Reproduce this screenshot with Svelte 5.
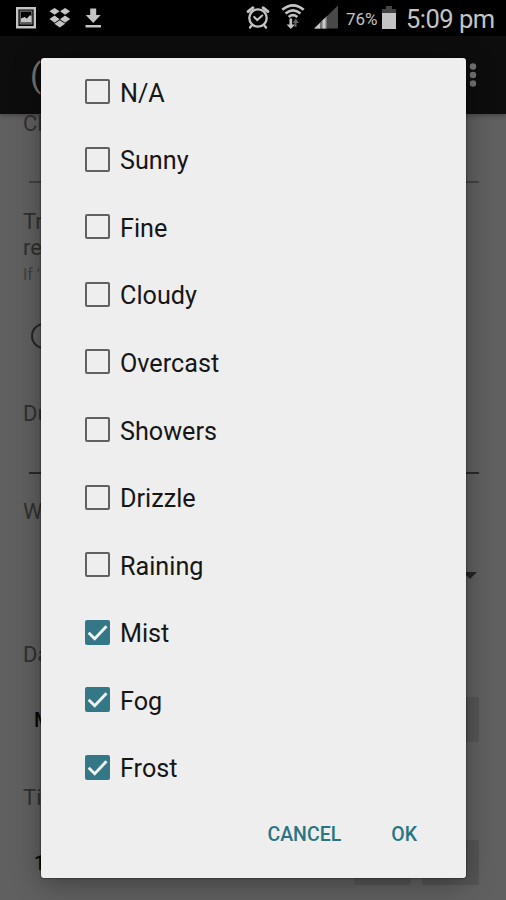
<script lang="ts">
  interface Option {
    label: string;
    checked: boolean;
  }

  let options: Option[] = $state([
    { label: "N/A", checked: false },
    { label: "Sunny", checked: false },
    { label: "Fine", checked: false },
    { label: "Cloudy", checked: false },
    { label: "Overcast", checked: false },
    { label: "Showers", checked: false },
    { label: "Drizzle", checked: false },
    { label: "Raining", checked: false },
    { label: "Mist", checked: true },
    { label: "Fog", checked: true },
    { label: "Frost", checked: true },
  ]);

  function toggle(option: Option) {
    option.checked = !option.checked;
  }
</script>

<div class="screen">
  <header class="status-bar">
    <svg class="status-left" width="90" height="36" viewBox="0 0 90 36">
      <!-- Screenshot -->
      <path d="M1.2 8.2h17.6v19.1H1.2z" fill="none" stroke="#c4c4c4" stroke-width="2.4" />
      <path d="M4.2 11.2h11.6v12.6H4.2z" fill="none" stroke="#777" stroke-width="1.2" />
      <path d="M5 22.5v-4l3.5-1.5 2.5 1.5 3-3.5 1.5 1.5v6z" fill="#c4c4c4" />
      <!-- Dropbox -->
      <g fill="#c4c4c4">
        <path d="M38.6 8l5 3.2-5 3.6-5.2-3.6zM49 8l5.2 3.2-5.2 3.6-5-3.6z" />
        <path d="M38.6 15.5l5 3.8-5 3.4-5.2-3.6zM49 15.5l5.2 3.6-5.2 3.6-5-3.4z" />
        <path d="M43.8 20.3l5.4 3.5-5.4 3.7-5.4-3.7z" />
      </g>
      <!-- Download -->
      <path d="M74.2 8.5h6v6.5h4.5l-7.5 8-7.5-8h4.5zM69.5 25h15.5v2.4H69.5z" fill="#c4c4c4" />
    </svg>

    <div class="status-right">
      <svg width="96" height="36" viewBox="0 0 96 36">
        <!-- Alarm -->
        <g fill="none" stroke="#c4c4c4" stroke-width="2.3" stroke-linecap="round">
          <circle cx="12" cy="18" r="8.7" />
          <path d="M2.2 11.500l4.600-3.700M17.200 7.800l4.600 3.700" stroke-width="3" />
          <path d="M6 25l-2 2.500M18 25l2 2.500" />
          <path d="M8.2 17l3 3 5-4.500" stroke-width="2" />
        </g>
        <!-- Wifi -->
        <g fill="none" stroke="#c4c4c4" stroke-width="2.600">
          <path d="M36.300 9.800Q47 1 57.700 9.800" />
          <path d="M39.500 13.500Q47 7.200 54.500 13.500" />
          <path d="M42.700 17Q47 13.300 51.300 17" />
        </g>
        <path d="M43.500 18.500h2.600v6H49l-4.200 4.500-4.200-4.500h2.900z" fill="#c4c4c4" />
        <path d="M50.500 27h-2v-4h-1.800l3.100-4.400 3.100 4.400h-2.400z" fill="#666" />
        <!-- Signal -->
        <path d="M92 5.500V28.500H68z" fill="#484848" />
        <path d="M81 16v12.500H68z" fill="#777" />
        <path d="M79.500 17.500v11h-3V20.500zM74 23v5.500h-5.500z" fill="#c9c9c9" />
      </svg>
      <span class="battery-level">76%</span>
      <svg class="battery" width="16" height="24" viewBox="0 0 16 24">
        <path d="M5 0h6v3h4v20H1V3h4z" fill="#444" />
        <path d="M1 7h14v16H1z" fill="#c4c4c4" />
      </svg>
      <span class="clock">5:09 pm</span>
    </div>
  </header>

  <div class="app-bar">
    <span class="app-title">(</span>
    <svg class="overflow" width="8" height="26" viewBox="0 0 8 26">
      <g fill="#747474">
        <circle cx="4" cy="4.500" r="3.200" />
        <circle cx="4" cy="13" r="3.200" />
        <circle cx="4" cy="21.500" r="3.200" />
      </g>
    </svg>
  </div>

  <main class="form">
    <div class="field client">
      <span class="field-label">Cl</span>
      <span class="underline"></span>
    </div>
    <div class="field travel">
      <span class="field-label">Tr<br />re</span>
      <span class="hint">If '</span>
      <span class="radio"></span>
    </div>
    <div class="field driver">
      <span class="field-label">Du</span>
      <span class="underline"></span>
    </div>
    <div class="field weather">
      <span class="field-label">W</span>
      <span class="caret"></span>
    </div>
    <div class="field date">
      <span class="field-label">Da</span>
      <div class="picker">
        <span class="picker-value">M</span>
        <span class="picker-button"></span>
      </div>
    </div>
    <div class="field">
      <span class="field-label">Ti</span>
      <div class="picker">
        <span class="picker-value">1</span>
        <span class="picker-button"></span>
        <span class="picker-button"></span>
      </div>
    </div>
  </main>

  <div class="dialog" role="dialog" aria-label="Weather">
    <div class="options">
      {#each options as option}
        <button
          class="option"
          role="checkbox"
          aria-checked={option.checked}
          onclick={() => toggle(option)}
        >
          <span class="box" class:box--checked={option.checked}>
            {#if option.checked}
              <svg width="25" height="25" viewBox="0 0 25 25">
                <path d="M3.700 12.800l6 5.900L21.500 6.300" fill="none" stroke="#f2f2f2" stroke-width="2.900" />
              </svg>
            {/if}
          </span>
          <span class="option-label">{option.label}</span>
        </button>
      {/each}
    </div>
    <div class="actions">
      <button class="action">CANCEL</button>
      <button class="action">OK</button>
    </div>
  </div>
</div>

<style>
  :global(body) {
    background: #000;
  }

  .screen {
    position: relative;
    display: flex;
    flex-direction: column;
    width: 506px;
    height: 900px;
    overflow: hidden;
    background: #606060;
    font-family: Roboto, "Liberation Sans", sans-serif;
  }

  button {
    padding: 0;
    border: none;
    background: transparent;
    font-family: inherit;
    cursor: pointer;
  }

  /* Status bar */
  .status-bar {
    display: flex;
    flex: none;
    justify-content: space-between;
    height: 36px;
    padding: 0 12px 0 16px;
    background: #000;
    color: #c4c4c4;
  }

  .status-left {
    flex: none;
  }

  .status-right {
    display: flex;
    align-items: center;
  }

  .battery-level {
    width: 31px;
    margin-left: 4px;
    padding-top: 1px;
    font-size: 17px;
  }

  .battery {
    margin: -1px 9px 0 4px;
  }

  .clock {
    width: 88px;
    padding-top: 2px;
    font-size: 25.500px;
    line-height: 36px;
    letter-spacing: -0.500px;
    white-space: nowrap;
  }

  /* App bar */
  .app-bar {
    display: flex;
    flex: none;
    align-items: center;
    justify-content: space-between;
    height: 78px;
    padding: 0 29px 0 30px;
    box-sizing: border-box;
    background: #0d0d0d;
    color: #747474;
    box-shadow: 0 2px 4px rgba(0, 0, 0, 0.25);
  }

  .app-title {
    font-size: 33px;
  }

  .overflow {
    margin-top: -1px;
  }

  /* Form behind the dialog */
  .form {
    display: flex;
    flex-direction: column;
    padding: 1px 27px 0 23px;
    color: #303030;
  }

  .field {
    display: flex;
    flex-direction: column;
    flex: none;
  }

  .field-label {
    font-size: 22px;
    line-height: 26px;
  }

  .underline {
    height: 2px;
    margin-left: 6px;
    background: #424242;
  }

  .client {
    height: 94px;
    margin-top: -4px;
  }

  .client .underline {
    margin-top: 44px;
  }

  .travel {
    height: 196px;
    margin-top: 4px;
  }

  .hint {
    font-size: 16px;
    line-height: 20px;
    margin-top: 4px;
    color: #404040;
  }

  .radio {
    width: 22px;
    height: 22px;
    margin: 38px 0 0 8px;
    border: 2px solid #242424;
    border-radius: 50%;
  }

  .driver {
    height: 98px;
    margin-top: -4px;
  }

  .driver .underline {
    margin-top: 45px;
    background: #2a2a2a;
  }

  .weather {
    height: 143px;
  }

  .caret {
    align-self: flex-end;
    margin-top: 47px;
    margin-right: 2px;
    border: 7.500px solid transparent;
    border-top-color: #242424;
    border-bottom: none;
  }

  .date {
    height: 143px;
  }

  .picker {
    display: flex;
    align-items: center;
    gap: 11px;
    height: 45px;
    margin-top: 29px;
    padding-left: 11px;
  }

  .picker-value {
    flex: 1;
    font-size: 20px;
    font-weight: 500;
    color: #080808;
  }

  .picker-button {
    width: 57px;
    height: 45px;
    border-radius: 2px;
    background: #555;
  }

  /* Dialog */
  .dialog {
    position: absolute;
    top: 58px;
    left: 41px;
    width: 425px;
    height: 820px;
    border-radius: 3px;
    background: #eee;
    box-shadow:
      0 0 2px rgba(0, 0, 0, 0.8),
      0 5px 28px rgba(0, 0, 0, 0.35);
  }

  .options {
    display: flex;
    flex-direction: column;
  }

  .option {
    display: flex;
    align-items: center;
    height: 67.550px;
    padding-left: 44px;
    text-align: left;
  }

  .box {
    width: 25px;
    height: 25px;
    box-sizing: border-box;
    border: 2px solid #606060;
    border-radius: 2px;
  }

  .box--checked {
    border: none;
    background: #347888;
  }

  .box svg {
    display: block;
  }

  .option-label {
    margin: 4px 0 0 10px;
    font-size: 25.200px;
    line-height: 30px;
    color: #161616;
  }

  .actions {
    display: flex;
    justify-content: flex-end;
    gap: 50px;
    padding: 22px 49px 0 0;
  }

  .action {
    font-size: 19.500px;
    font-weight: 500;
    line-height: 24px;
    color: #2b7582;
  }
</style>
